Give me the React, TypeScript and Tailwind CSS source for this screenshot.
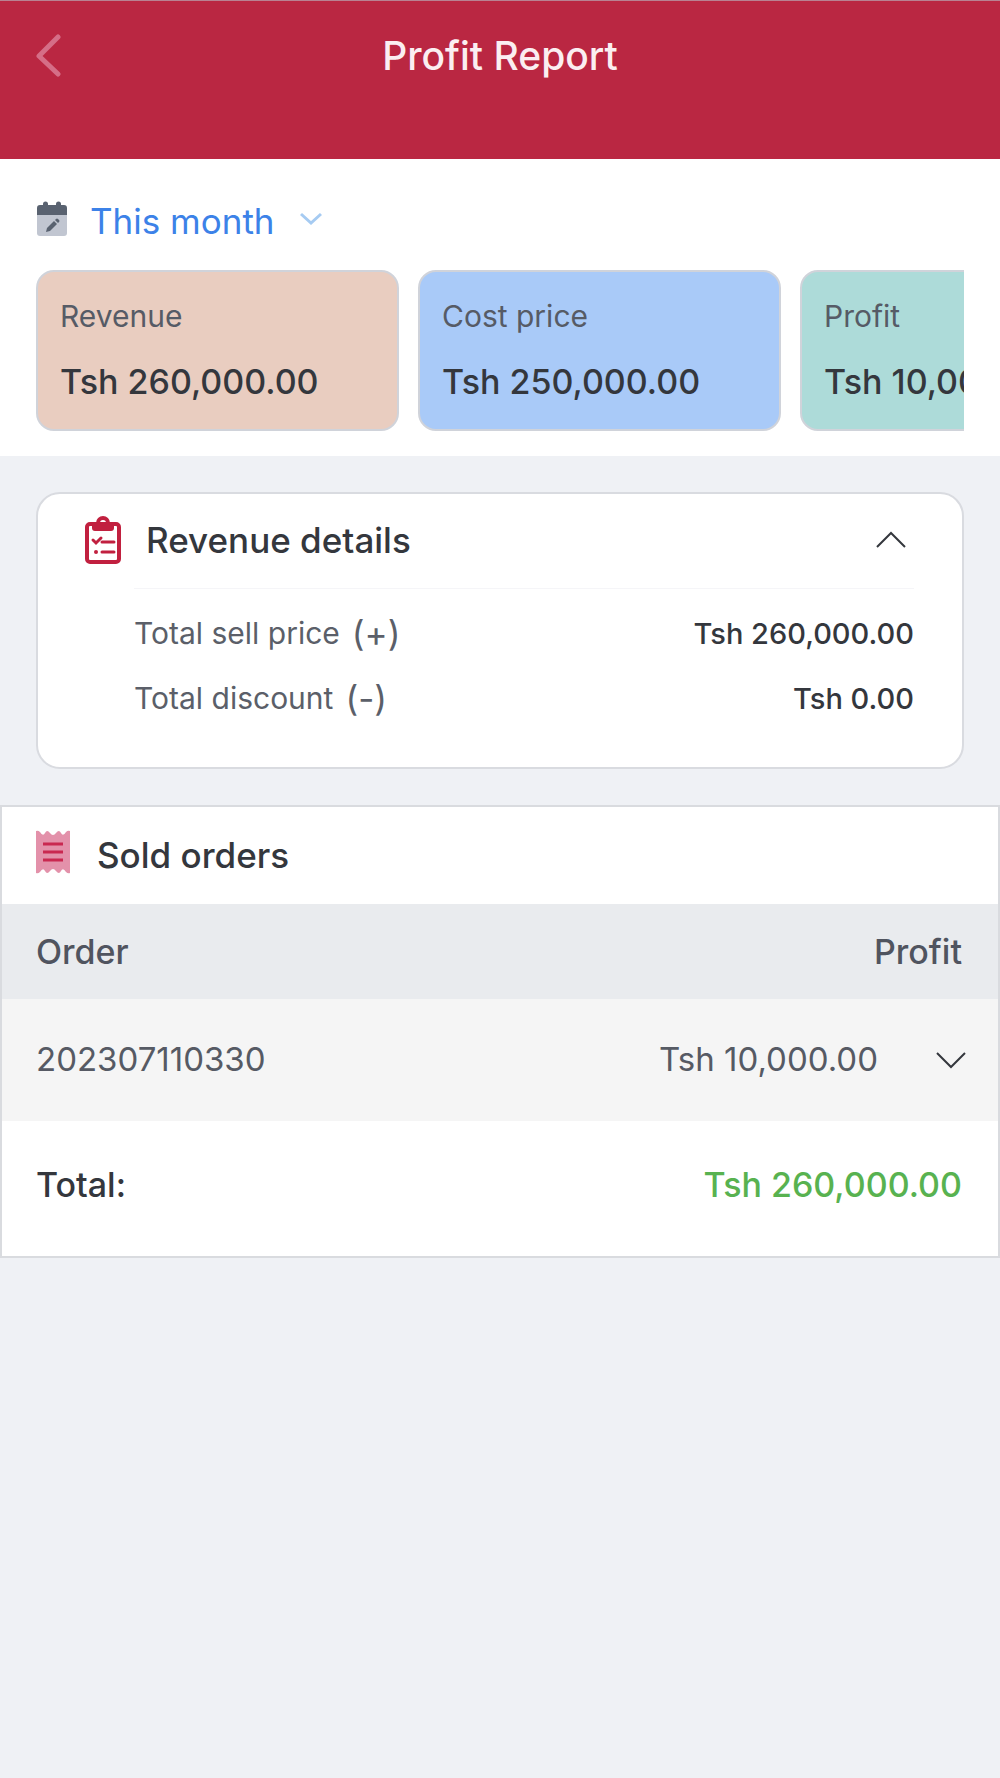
import React, { useState } from 'react';

interface SummaryCard {
  label: string;
  value: string;
  tone: string;
}

interface Order {
  id: string;
  profit: string;
}

const summaryCards: SummaryCard[] = [
  { label: 'Revenue', value: 'Tsh 260,000.00', tone: 'bg-[#e9cdc0]' },
  { label: 'Cost price', value: 'Tsh 250,000.00', tone: 'bg-[#a9caf8]' },
  { label: 'Profit', value: 'Tsh 10,000.00', tone: 'bg-[#addbd9]' },
];

const revenueDetails = [
  { label: 'Total sell price', sign: '(+)', value: 'Tsh 260,000.00' },
  { label: 'Total discount', sign: '(-)', value: 'Tsh 0.00' },
];

const orders: Order[] = [{ id: '202307110330', profit: 'Tsh 10,000.00' }];

const BackIcon = () => (
  <svg width="26" height="44" viewBox="0 0 26 44" fill="none" aria-hidden="true">
    <path d="M22 3 3 22l19 18" stroke="currentColor" strokeWidth="5" strokeLinecap="round" strokeLinejoin="round" />
  </svg>
);

const Chevron: React.FC<{ up?: boolean }> = ({ up = false }) => (
  <svg
    width="30"
    height="18"
    viewBox="0 0 30 18"
    fill="none"
    aria-hidden="true"
    className={up ? 'rotate-180' : ''}
  >
    <path d="M1 2l14 14L29 2" stroke="currentColor" strokeWidth="2" />
  </svg>
);

const CalendarIcon = () => (
  <svg width="32" height="36" viewBox="0 0 32 36" aria-hidden="true" className="shrink-0">
    <path d="M1 13h30v19q0 3-3 3H4q-3 0-3-3z" fill="#c1c6d1" />
    <path d="M1 14V7q0-3 3-3h3V3a2.500 2.500 0 0 1 5 0v1h8V3a2.500 2.500 0 0 1 5 0v1h3q3 0 3 3v7z" fill="#596270" />
    <path d="m10 31 1-4 7-7 3 3-7 7z" fill="#596270" />
    <path d="m19 19 1-1q1-1 2 0l1 1q1 1 0 2l-1 1z" fill="#596270" />
  </svg>
);

const ClipboardIcon = () => (
  <svg width="38" height="48" viewBox="0 0 38 48" aria-hidden="true" className="shrink-0">
    <rect x="3" y="8" width="32" height="38" rx="3" fill="none" stroke="#c1203f" strokeWidth="4" />
    <path
      d="M8 7h4a7 7 0 0 1 14 0h4v5q0 3-3 3H11q-3 0-3-3zM19 4a3 3 0 1 0 0 6 3 3 0 0 0 0-6z"
      fill="#c1203f"
      fillRule="evenodd"
    />
    <path d="m9 24 3 3 5-5M18 26h12M18 36h12" fill="none" stroke="#c1203f" strokeWidth="3" strokeLinecap="round" />
    <circle cx="12" cy="36" r="2" fill="#c1203f" />
  </svg>
);

const ReceiptIcon = () => (
  <svg width="34" height="44" viewBox="0 0 34 44" aria-hidden="true" className="shrink-0">
    <path
      d="M0 1q2-1 4 1 3 5 5 1 2-4 5 0 3 4 6 0 3-4 5 0t5-1q2-2 4-1v42q-2 1-4-1-3-5-5-1-2 4-5 0-3-4-6 0-3 4-5 0t-5 1q-2 2-4 1z"
      fill="#e391aa"
    />
    <path d="M7 14h20M7 22h20M7 30h20" stroke="#c92850" strokeWidth="3" />
  </svg>
);

export default function App() {
  const [period, setPeriod] = useState('This month');
  const [detailsOpen, setDetailsOpen] = useState(true);
  const [openOrder, setOpenOrder] = useState<string | null>(null);

  return (
    <div className="min-h-screen bg-[#eff1f5] font-['Inter',sans-serif] text-[#34373d]">
      {/* Header */}
      <header className="grid grid-cols-[1fr_auto_1fr] items-start border-t border-[#b98292] bg-[#ba2742] px-9 pt-[31px] pb-[79px]">
        <button type="button" aria-label="Back" className="flex h-12 w-12 items-center text-[#d56e87]">
          <BackIcon />
        </button>
        <h1 className="text-[39px] leading-12 font-medium text-[#fbeef1]">Profit Report</h1>
      </header>

      {/* Period and summary */}
      <section className="bg-white pt-9 pb-[25px] pl-9">
        <div className="flex h-12 items-center gap-[22px]">
          <CalendarIcon />
          <div className="relative flex items-center text-[#3c82e8]">
            <select
              aria-label="Period"
              value={period}
              onChange={(e) => setPeriod(e.target.value)}
              className="h-12 w-[236px] appearance-none bg-transparent text-[35px]"
            >
              <option>This month</option>
              <option>Last month</option>
              <option>This year</option>
            </select>
            <svg
              width="22"
              height="14"
              viewBox="0 0 22 14"
              fill="none"
              aria-hidden="true"
              className="pointer-events-none absolute right-1 text-[#a6cbf2]"
            >
              <path d="m1 2 10 9L21 2" stroke="currentColor" strokeWidth="3" />
            </svg>
          </div>
        </div>

        <div className="mt-[27px] mr-9 flex gap-[19px] overflow-hidden">
          {summaryCards.map((card) => (
            <div
              key={card.label}
              className={`w-[363px] shrink-0 rounded-[18px] border-2 border-[#d0d3da] px-[22px] pt-5 pb-[22px] ${card.tone}`}
            >
              <p className="text-[30px] leading-12 text-[#565b66]">{card.label}</p>
              <p className="mt-[17px] text-[34px] leading-[50px] font-medium whitespace-nowrap">{card.value}</p>
            </div>
          ))}
        </div>
      </section>

      {/* Revenue details */}
      <section className="mx-9 mt-9 rounded-3xl border-2 border-[#d9dbe0] bg-white pr-12 pb-9 pl-[46px]">
        <button
          type="button"
          aria-expanded={detailsOpen}
          onClick={() => setDetailsOpen(!detailsOpen)}
          className="flex h-[94px] w-full items-center gap-6 pr-2 pb-0.5 text-left"
        >
          <ClipboardIcon />
          <span className="flex-1 text-[35px] font-medium">Revenue details</span>
          <Chevron up={detailsOpen} />
        </button>
        {detailsOpen && (
          <dl className="ml-[50px] border-t border-[#f5f5f8] pt-3">
            {revenueDetails.map((row) => (
              <div key={row.label} className="flex h-[65px] items-center justify-between">
                <dt className="flex items-center gap-3 text-[30px] text-[#5b5f69]">
                  {row.label} <span className="text-[35px]">{row.sign}</span>
                </dt>
                <dd className="text-[29px] font-medium">{row.value}</dd>
              </div>
            ))}
          </dl>
        )}
      </section>

      {/* Sold orders */}
      <section className="mt-9 border-2 border-[#d9dbdf] bg-white">
        <div className="flex h-[97px] items-center gap-[27px] pb-2 pl-[34px]">
          <ReceiptIcon />
          <h2 id="sold-orders" className="pt-2 text-[35px] font-medium">Sold orders</h2>
        </div>
        <table aria-labelledby="sold-orders" className="w-full text-[34px]">
          <thead className="bg-[#e9ebee] text-[#50545f]">
            <tr className="h-[95px]">
              <th scope="col" className="pl-[34px] text-left font-medium">Order</th>
              <th scope="col" className="pr-9 text-right font-medium">Profit</th>
            </tr>
          </thead>
          <tbody className="bg-[#f5f5f5] text-[33px] text-[#565a64]">
            {orders.map((order) => (
              <tr key={order.id} className="h-[122px]">
                <td className="pl-[34px]">{order.id}</td>
                <td className="pr-8">
                  <div className="flex items-center justify-end gap-[58px]">
                    {order.profit}
                    <button
                      type="button"
                      aria-label={`Details of order ${order.id}`}
                      aria-expanded={openOrder === order.id}
                      onClick={() => setOpenOrder(openOrder === order.id ? null : order.id)}
                      className="text-[#34373d]"
                    >
                      <Chevron up={openOrder === order.id} />
                    </button>
                  </div>
                </td>
              </tr>
            ))}
          </tbody>
          <tfoot>
            <tr className="h-[135px]">
              <th scope="row" className="pb-2 pl-[34px] text-left font-medium">Total:</th>
              <td className="pr-9 pb-2 text-right font-medium text-[#58b250]">Tsh 260,000.00</td>
            </tr>
          </tfoot>
        </table>
      </section>
    </div>
  );
}
